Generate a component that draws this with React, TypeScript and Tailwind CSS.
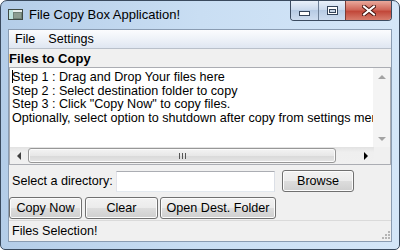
import { useState } from 'react';

const BTN =
    'h-[22px] rounded-[3px] border border-[#707070] bg-[linear-gradient(to_bottom,#f2f2f2_0%,#ebebeb_50%,#dddddd_50%,#cfcfcf_100%)] shadow-[inset_0_0_0_1px_#fcfcfc] text-[12.6px] text-black flex items-center justify-center';

const LINES = [
    'Step 1 : Drag and Drop Your files here',
    'Step 2 : Select destination folder to copy',
    'Step 3 : Click "Copy Now" to copy files.',
    'Optionally, select option to shutdown after copy from settings menu',
];

function AppIcon() {
    return (
        <svg width="15" height="11" viewBox="0 0 15 11">
            <rect x="0.5" y="0.5" width="14" height="10" fill="#6f8176" stroke="#3f4a44" />
            <rect x="1" y="1" width="4" height="9" fill="#bfe3de" />
            <rect x="5" y="1" width="9" height="2" fill="#e9efec" />
            <rect x="6" y="4" width="7" height="5" fill="#8c9c90" />
        </svg>
    );
}

function TitleButtons() {
    return (
        <div className="flex h-[20px] mr-[7px] rounded-b-[4px] border border-t-0 border-[#3b4b60] overflow-hidden">
            <div className="w-[27px] flex items-center justify-center bg-[linear-gradient(to_bottom,#e8f0fa,#c8d8ec_50%,#b7cbe4_50%,#cddcef)]">
                <svg width="11" height="5" viewBox="0 0 11 5" className="mt-[5px]">
                    <rect x="0.5" y="0.5" width="10" height="4" fill="#fff" stroke="#34445a" />
                </svg>
            </div>
            <div className="w-[27px] border-l border-[#6d7f96] flex items-center justify-center bg-[linear-gradient(to_bottom,#e8f0fa,#c8d8ec_50%,#b7cbe4_50%,#cddcef)]">
                <svg width="11" height="9" viewBox="0 0 11 9">
                    <rect x="0.5" y="0.5" width="10" height="8" fill="#fff" stroke="#34445a" />
                    <rect x="2.5" y="3.5" width="6" height="3" fill="#c9d6e6" stroke="#34445a" />
                </svg>
            </div>
            <div className="w-[46px] border-l border-[#7a3b33] flex items-center justify-center bg-[linear-gradient(to_bottom,#e9a99c,#d0685a_45%,#c2483a_55%,#d77d6d)]">
                <svg width="14" height="11" viewBox="0 0 14 11">
                    <path d="M2 1.5 L12 9.5 M12 1.5 L2 9.5" stroke="#46140f" strokeWidth="4" strokeLinecap="square" />
                    <path d="M2 1.5 L12 9.5 M12 1.5 L2 9.5" stroke="#ffffff" strokeWidth="2" strokeLinecap="square" />
                </svg>
            </div>
        </div>
    );
}

function Arrow({ dir, color }: { dir: 'l' | 'r' | 'u' | 'd'; color: string }) {
    const pts = {
        l: '5,0 5,8 1,4',
        r: '1,0 1,8 5,4',
        u: '0,5 8,5 4,1',
        d: '0,1 8,1 4,5',
    }[dir];
    const w = dir === 'l' || dir === 'r' ? 6 : 8;
    const h = dir === 'l' || dir === 'r' ? 8 : 6;
    return (
        <svg width={w} height={h} viewBox={`0 0 ${w} ${h}`}>
            <polygon points={pts} fill={color} />
        </svg>
    );
}

function FilesBox() {
    return (
        <div className="h-[98px] border border-[#abadb3] bg-white flex flex-col">
            <div className="flex h-[79px]">
                <div className="flex-1 min-w-0 overflow-hidden pl-[2px] pt-[2px] leading-[13.7px] text-[12.6px] text-black whitespace-nowrap">
                    {LINES.map((l, i) => (
                        <div key={i}>
                            {i === 0 && <span className="inline-block w-px h-[13px] bg-black align-[-2px] -mr-px" />}
                            {l}
                        </div>
                    ))}
                </div>
                <div className="w-[17px] bg-[#f4f4f4] flex flex-col justify-between">
                    <div className="h-[17px] flex items-center justify-center"><Arrow dir="u" color="#a3a3a3" /></div>
                    <div className="h-[17px] flex items-center justify-center"><Arrow dir="d" color="#a3a3a3" /></div>
                </div>
            </div>
            <div className="flex h-[17px]">
                <div className="flex-1 flex bg-[linear-gradient(to_bottom,#e2e2e2,#efefef_30%,#f0f0f0)]">
                    <div className="w-[17px] flex items-center justify-center"><Arrow dir="l" color="#404040" /></div>
                    <div className="flex-1 flex items-stretch py-px pl-px pr-[21px]">
                        <div className="w-[308px] rounded-[3px] border border-[#979797] bg-[linear-gradient(to_bottom,#f3f3f3,#e8e8e8_50%,#d9d9d9_51%,#e4e4e4)] shadow-[inset_0_0_0_1px_#fbfbfb] flex items-center justify-center gap-[2px]">
                            <div className="w-px h-[6px] bg-[#555]" />
                            <div className="w-px h-[6px] bg-[#555]" />
                            <div className="w-px h-[6px] bg-[#555]" />
                        </div>
                    </div>
                    <div className="w-[17px] flex items-center justify-center"><Arrow dir="r" color="#000" /></div>
                </div>
                <div className="w-[17px] bg-[#f0f0f0]" />
            </div>
        </div>
    );
}

export default function App() {
    const [dir, setDir] = useState('');
    return (
        <div className="w-[400px] h-[250px] bg-white font-['Liberation_Sans',Arial,sans-serif]">
            <div className="w-[400px] h-[250px] flex flex-col rounded-t-[7px] rounded-b-[5px] border border-[#3a4a5e] bg-[linear-gradient(to_right,#b4cde8,#c9def3_50%,#d4e6f8)] overflow-hidden">
                {/* Title bar */}
                <div className="h-[28px] flex items-start shrink-0">
                    <div className="pl-[7px] pt-[8px]"><AppIcon /></div>
                    <span className="ml-[6px] mt-[5px] text-[13px] leading-[17px] text-black">File Copy Box Application!</span>
                    <div className="ml-auto"><TitleButtons /></div>
                </div>

                {/* Client */}
                <div className="flex-1 mx-[7px] mb-[7px] border border-[#8a9cb2] bg-[#f0f0f0] flex flex-col min-h-0">
                    <div className="h-[19px] shrink-0 flex items-center border-b border-[#b9c0ca] bg-[linear-gradient(to_bottom,#fbfcfe,#eef2f8_50%,#dfe6f1)] text-[12.6px] text-black">
                        <span className="ml-[6px]">File</span>
                        <span className="ml-[13px]">Settings</span>
                    </div>
                    <div className="h-[18px] shrink-0 flex items-center font-bold text-[13px] text-black leading-none">Files to Copy</div>
                    <FilesBox />
                    <div className="mt-[5px] h-[22px] flex items-center">
                        <span className="w-[107px] pl-[3px] text-[12.6px] text-black">Select a directory:</span>
                        <input
                            value={dir}
                            onChange={(e) => setDir(e.target.value)}
                            className="w-[159px] h-[21px] border border-[#abadb3] border-l-[#e2e3ea] border-r-[#dbdfe6] border-b-[#e3e9ef] bg-white outline-none text-[12.6px] px-1"
                        />
                        <button className={`${BTN} ml-[7px] w-[72px]`}>Browse</button>
                    </div>
                    <div className="mt-[5px] h-[22px] flex items-center gap-[2px]">
                        <button className={`${BTN} w-[73px]`}>Copy Now</button>
                        <button className={`${BTN} w-[73px] ml-px`}>Clear</button>
                        <button className={`${BTN} w-[116px]`}>Open Dest. Folder</button>
                    </div>
                    <div className="mt-px flex-1 border-t border-[#dadada] flex items-center justify-between">
                        <span className="pl-[3px] text-[12.6px] text-black">Files Selection!</span>
                        <svg width="10" height="10" viewBox="0 0 10 10" className="self-end mr-px mb-px">
                            {[[8, 0], [8, 3], [5, 3], [8, 6], [5, 6], [2, 6]].map(([x, y], i) => (
                                <rect key={i} x={x} y={y + 1} width="2" height="2" fill="#b5b5b5" />
                            ))}
                        </svg>
                    </div>
                </div>
            </div>
        </div>
    );
}
